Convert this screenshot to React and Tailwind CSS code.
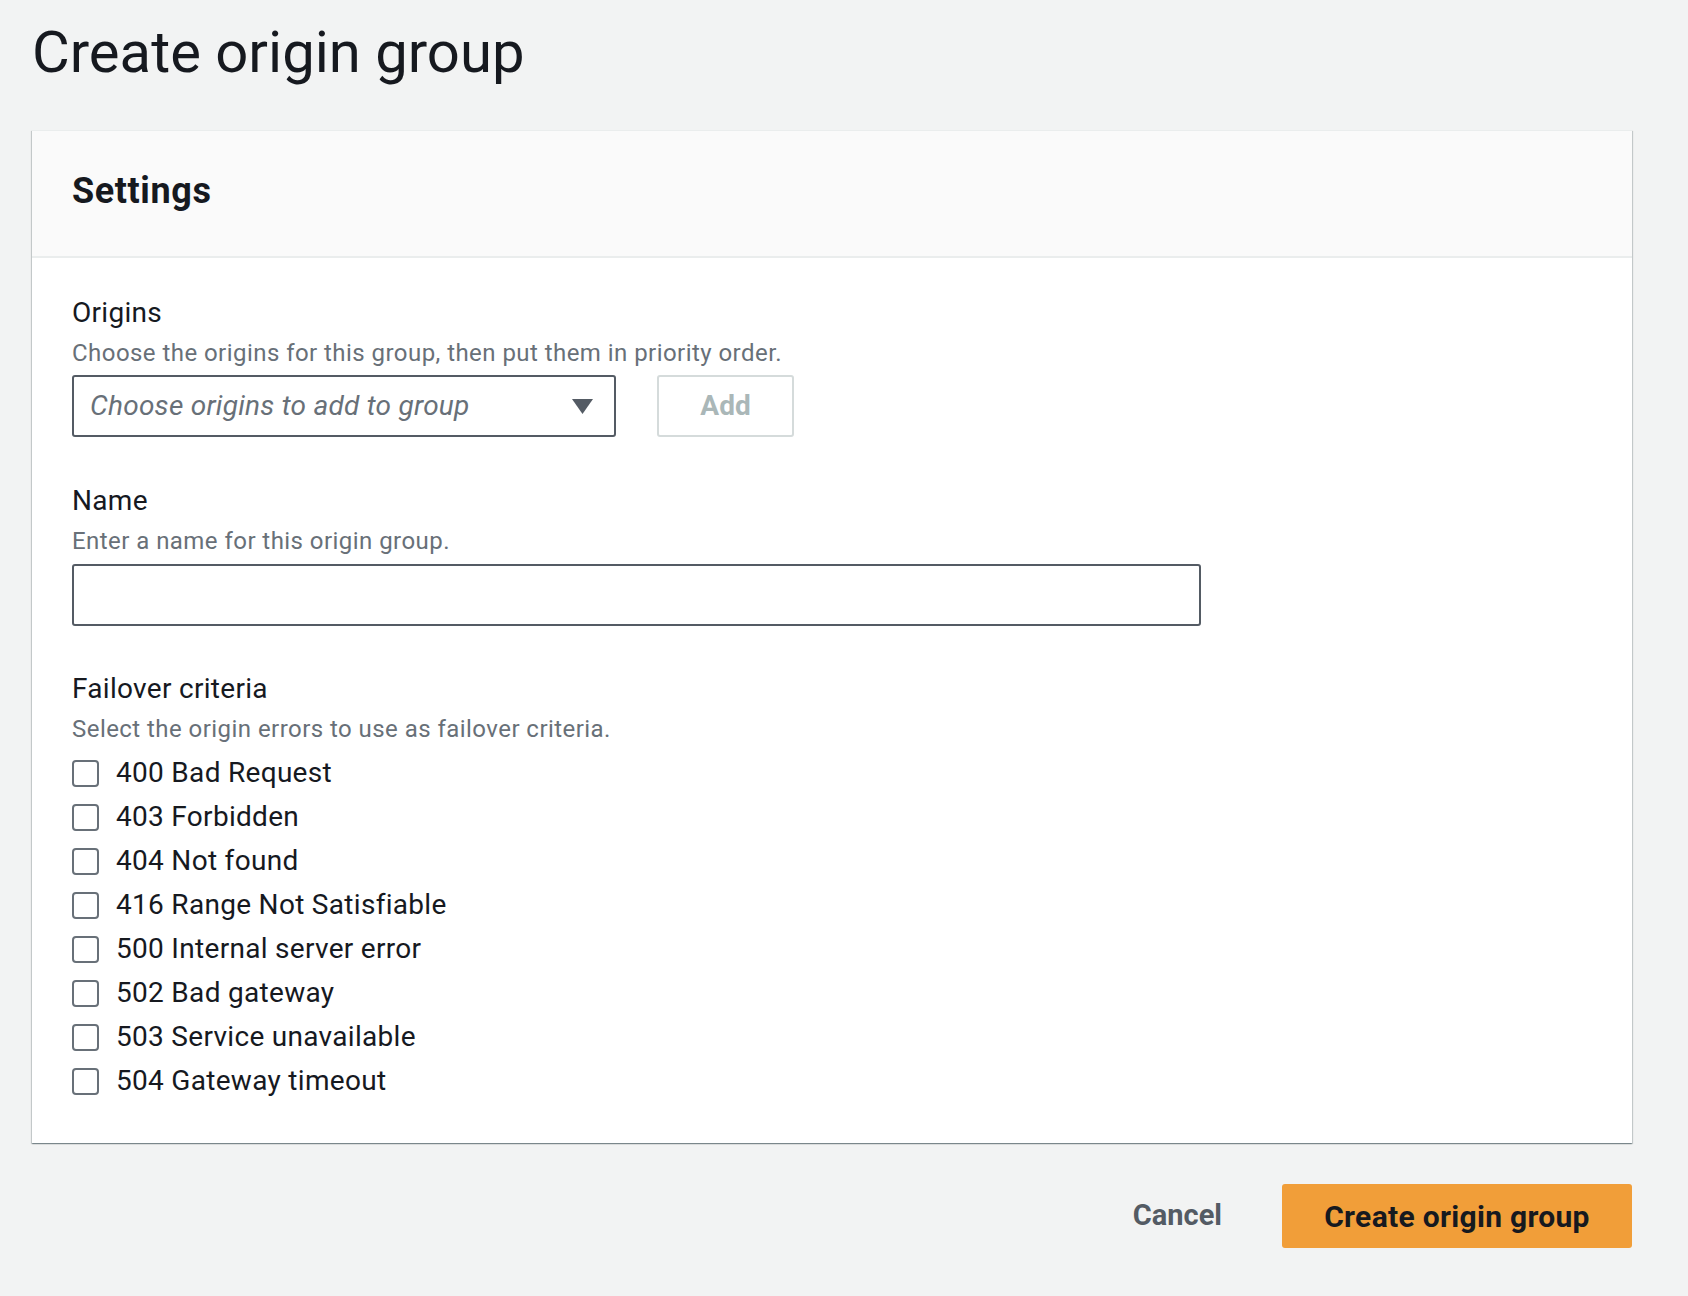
import { useState } from 'react'

const criteria = [
  '400 Bad Request',
  '403 Forbidden',
  '404 Not found',
  '416 Range Not Satisfiable',
  '500 Internal server error',
  '502 Bad gateway',
  '503 Service unavailable',
  '504 Gateway timeout',
]

function FieldLabel({ title, hint }) {
  return (
    <div>
      <p className="text-[28px] leading-[36px] tracking-[0.3px] text-[#16191f]">{title}</p>
      <p className="mt-[2px] text-[24px] leading-[40px] tracking-[0.45px] text-[#687078]">{hint}</p>
    </div>
  )
}

export default function App() {
  const [checked, setChecked] = useState({})
  const [name, setName] = useState('')

  const toggle = (code) => setChecked((prev) => ({ ...prev, [code]: !prev[code] }))

  return (
    <div
      className="min-h-[1296px] bg-[#f2f3f3] pl-[32px] pr-[56px] pt-[17px] text-[#16191f]"
      style={{ fontFamily: 'Roboto, "Noto Sans", sans-serif' }}
    >
      <h1 className="text-[58px] font-normal leading-[70px]">Create origin group</h1>

      <section className="mt-[43px] border-t border-[#eaeded] bg-white shadow-[0_1px_1px_0_rgba(0,28,36,0.3),1px_1px_1px_0_rgba(0,28,36,0.15),-1px_1px_1px_0_rgba(0,28,36,0.15)]">
        <div className="flex h-[127px] items-center border-b-2 border-[#eaeded] bg-[#fafafa] px-[40px] pb-[6px]">
          <h2 className="text-[36px] font-bold leading-[44px] tracking-[0.6px]">Settings</h2>
        </div>

        <div className="px-[40px] pb-[40px] pt-[37px]">
          <FieldLabel title="Origins" hint="Choose the origins for this group, then put them in priority order." />
          <div className="mt-[2px] flex items-center gap-[41px]">
            <button
              type="button"
              className="flex h-[62px] w-[544px] items-center justify-between rounded-[3px] border-2 border-[#545b64] bg-white pl-[16px] pr-[21px] text-left"
            >
              <span className="text-[28px] italic tracking-[0.25px] text-[#687078]">Choose origins to add to group</span>
              <svg width="21" height="15" viewBox="0 0 21 15">
                <path d="M0 0 H21 L10.5 15 Z" fill="#545b64" />
              </svg>
            </button>
            <button
              type="button"
              disabled
              className="h-[62px] w-[137px] rounded-[3px] border-2 border-[#d5dbdb] bg-white text-[28px] font-bold text-[#aab7b8]"
            >
              Add
            </button>
          </div>

          <div className="mt-[46px]">
            <FieldLabel title="Name" hint="Enter a name for this origin group." />
            <input
              value={name}
              onChange={(e) => setName(e.target.value)}
              className="mt-[3px] block h-[62px] w-[1129px] rounded-[3px] border-2 border-[#545b64] bg-white px-[16px] text-[28px] outline-none"
            />
          </div>

          <div className="mt-[45px]">
            <FieldLabel title="Failover criteria" hint="Select the origin errors to use as failover criteria." />
            <div className="mt-[2px]">
              {criteria.map((label) => (
                <label key={label} className="flex h-[44px] cursor-pointer items-center gap-[17px]">
                  <span
                    onClick={() => toggle(label)}
                    className="flex h-[27px] w-[27px] items-center justify-center rounded-[4px] border-2 border-[#687078] bg-white"
                  >
                    {checked[label] && (
                      <svg width="16" height="16" viewBox="0 0 16 16">
                        <path d="M2 8 L6 12 L14 3" stroke="#16191f" strokeWidth="2.5" fill="none" />
                      </svg>
                    )}
                  </span>
                  <span className="text-[28px] leading-[44px] tracking-[0.3px]">{label}</span>
                </label>
              ))}
            </div>
          </div>
        </div>
      </section>

      <div className="mt-[41px] flex items-center justify-end">
        <button type="button" className="mr-[60px] text-[29px] font-bold text-[#545b64]">
          Cancel
        </button>
        <button
          type="button"
          className="h-[64px] w-[350px] rounded-[3px] bg-[#f19e39] text-[30px] font-bold tracking-[0.3px] text-[#16191f]"
        >
          Create origin group
        </button>
      </div>
    </div>
  )
}
